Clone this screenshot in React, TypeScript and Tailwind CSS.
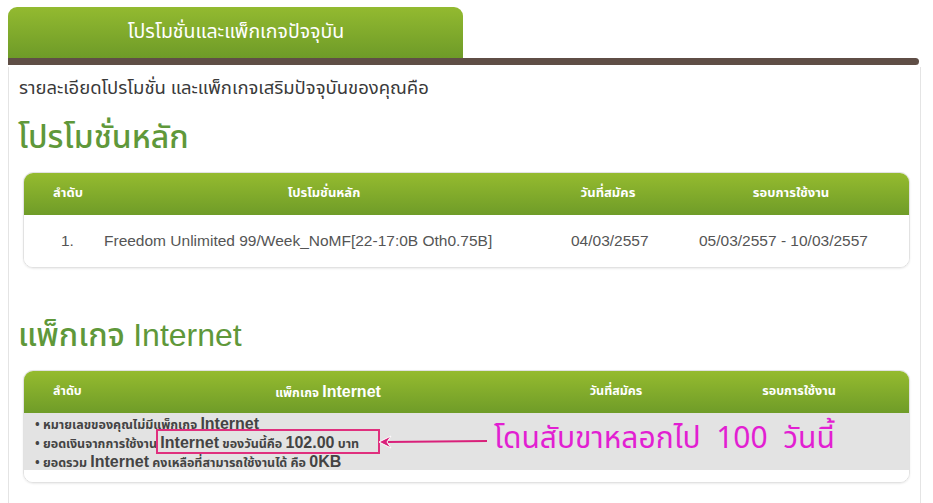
export default function App() {
  return (
    <div className="w-[933px] h-[503px] overflow-hidden bg-white pt-[7px] pl-[8px] font-['Noto_Sans_Thai','Liberation_Sans',sans-serif]">
      {/* Tab + bar */}
      <div className="w-[455px] h-[51px] rounded-t-[9px] bg-gradient-to-b from-[#93ba30] to-[#6e9b28] flex items-center justify-center">
        <span className="text-white text-[19.5px] pl-[1px]">โปรโมชั่นและแพ็กเกจปัจจุบัน</span>
      </div>
      <div className="w-[911px] h-[7px] bg-[#5f4e46] rounded-r-[4px]" />

      {/* Content panel */}
      <div className="w-[913px] h-[440px] border-l border-r border-[#e4e4e4] mt-[2px]">
        <p className="pl-[10px] pt-[8px] text-[18.5px] leading-[26px] text-[#3a3a3a]">
          รายละเอียดโปรโมชั่น และแพ็กเกจเสริมปัจจุบันของคุณคือ
        </p>
        <h2 className="pl-[9px] mt-[15px] text-[32px] font-medium leading-[44px] text-[#5f983a]">โปรโมชั่นหลัก</h2>

        {/* Table 1 */}
        <div className="ml-[14px] mt-[12px] w-[887px] rounded-[10px] border border-[#e2e2e2] overflow-hidden shadow-[0_1px_2px_rgba(0,0,0,0.08)]">
          <div className="h-[42px] bg-gradient-to-b from-[#95bb2f] to-[#6f9c28] grid grid-cols-[100px_400px_168px_198px] items-center text-white text-[13px] font-bold">
            <span className="pl-[29px]">ลำดับ</span>
            <span className="text-center">โปรโมชั่นหลัก</span>
            <span className="text-center">วันที่สมัคร</span>
            <span className="text-center">รอบการใช้งาน</span>
          </div>
          <div className="h-[52px] bg-white grid grid-cols-[80px_467px_128px_1fr] items-center text-[15.5px] text-[#555] font-['Liberation_Sans',sans-serif]">
            <span className="pl-[37px]">1.</span>
            <span>Freedom Unlimited 99/Week_NoMF[22-17:0B Oth0.75B]</span>
            <span>04/03/2557</span>
            <span>05/03/2557 - 10/03/2557</span>
          </div>
        </div>

        <h2 className="pl-[9px] mt-[45px] text-[32px] font-medium leading-[44px] text-[#5f983a]">
          แพ็กเกจ <span className="font-['Liberation_Sans',sans-serif] font-normal">Internet</span>
        </h2>

        {/* Table 2 */}
        <div className="relative ml-[14px] mt-[12px] w-[887px] rounded-[10px] border border-[#e2e2e2] overflow-hidden shadow-[0_1px_2px_rgba(0,0,0,0.08)]">
          <div className="h-[42px] bg-gradient-to-b from-[#95bb2f] to-[#6f9c28] grid grid-cols-[100px_408px_168px_198px] items-center text-white text-[12.5px] font-bold">
            <span className="pl-[29px]">ลำดับ</span>
            <span className="text-center">
              แพ็กเกจ <span className="text-[16px] font-['Liberation_Sans',sans-serif]">Internet</span>
            </span>
            <span className="text-center">วันที่สมัคร</span>
            <span className="text-center">รอบการใช้งาน</span>
          </div>
          <div className="h-[57px] bg-[#e3e3e3] overflow-hidden pl-[11px] pt-[2px] text-[#444] text-[12.5px] font-bold leading-[17px]">
            <p>
              • หมายเลขของคุณไม่มีแพ็กเกจ <span className="text-[16px] font-['Liberation_Sans',sans-serif]">Internet</span>
            </p>
            <p>
              • ยอดเงินจากการใช้งาน <span className="text-[16px] font-['Liberation_Sans',sans-serif]">Internet</span> ของวันนี้คือ{" "}
              <span className="text-[16px] font-['Liberation_Sans',sans-serif]">102.00</span> บาท
            </p>
            <p>
              • ยอดรวม <span className="text-[16px] font-['Liberation_Sans',sans-serif]">Internet</span> คงเหลือที่สามารถใช้งานได้ คือ{" "}
              <span className="text-[16px] font-['Liberation_Sans',sans-serif]">0KB</span>
            </p>
          </div>
          <div className="h-[12px] bg-white" />

          {/* annotation */}
          <div className="absolute left-[132px] top-[58px] w-[224px] h-[25px] border-2 border-[#e0307e]" />
          <svg className="absolute left-[353px] top-[63px]" width="110" height="16" viewBox="0 0 110 16">
            <line x1="10" y1="8" x2="110" y2="7" stroke="#d9207a" strokeWidth="2" />
            <path d="M2 8 L14 2 L10 8 L14 14 Z" fill="#d9207a" stroke="#fff" strokeWidth="1" />
          </svg>
          <span className="absolute left-[470px] top-[49px] whitespace-pre text-[30px] leading-[38px] text-[#e21fd2] font-['Noto_Sans_Thai',sans-serif]">
            {"โดนสับขาหลอกไป  100  วันนี้"}
          </span>
        </div>
      </div>
    </div>
  );
}
